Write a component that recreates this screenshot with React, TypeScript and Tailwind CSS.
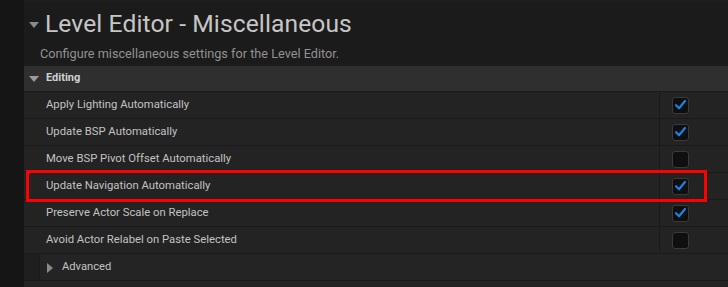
import React from 'react';

type Setting = { label: string; checked: boolean };

const settings: Setting[] = [
  { label: 'Apply Lighting Automatically', checked: true },
  { label: 'Update BSP Automatically', checked: true },
  { label: 'Move BSP Pivot Offset Automatically', checked: false },
  { label: 'Update Navigation Automatically', checked: true },
  { label: 'Preserve Actor Scale on Replace', checked: true },
  { label: 'Avoid Actor Relabel on Paste Selected', checked: false },
];

const CheckBox = ({ checked }: { checked: boolean }) => (
  <div className="w-[17px] h-[17px] rounded-[3px] bg-[#0f0f0f] border border-[#3a3a3a] flex items-center justify-center">
    {checked && (
      <svg width="17" height="17" viewBox="0 0 17 17" className="-m-px">
        <path d="M4 8.2 L7 11.3 L13 4" fill="none" stroke="#1c80ea" strokeWidth="2.2" strokeLinecap="round" strokeLinejoin="round" />
      </svg>
    )}
  </div>
);

const App = () => {
  return (
    <div className="relative w-[728px] h-[287px] flex bg-[#151515] overflow-hidden" style={{ fontFamily: 'Roboto, "Noto Sans", sans-serif' }}>
      {/* left gutter */}
      <div className="w-[24px] shrink-0 bg-[#151515]" />

      <div className="flex-1 flex flex-col bg-[#1b1b1b] border-t-2 border-[#1e1e1e]">
        {/* header */}
        <div className="h-[64px] flex flex-col">
          <div className="flex items-center h-[40px] pt-[4px]">
            <svg width="10" height="6" viewBox="0 0 10 6" className="ml-[5px] mt-[2px]">
              <path d="M0 0 H10 L5 6 Z" fill="#8a8a8a" />
            </svg>
            <span className="ml-[6px] text-[24.6px] leading-none text-[#c6c6c6] tracking-[0.1px]">Level Editor - Miscellaneous</span>
          </div>
          <div className="ml-[16px] mt-[6px] text-[12.7px] leading-none text-[#929292]">
            Configure miscellaneous settings for the Level Editor.
          </div>
        </div>

        {/* category */}
        <div className="h-[26px] flex items-center bg-[#2f2f2f] border-b border-[#1a1a1a]">
          <svg width="10" height="6" viewBox="0 0 10 6" className="ml-[5px]">
            <path d="M0 0 H10 L5 6 Z" fill="#9a9a9a" />
          </svg>
          <span className="ml-[7px] text-[11px] font-bold text-[#d0d0d0]">Editing</span>
        </div>

        {/* rows */}
        {settings.map((s) => (
          <div key={s.label} className="h-[27px] flex bg-[#232323] border-b border-[#1a1a1a]">
            <div className="w-[636px] flex items-center pl-[22px] pt-px border-r border-[#1a1a1a] text-[11.3px] text-[#c2c2c2]">
              {s.label}
            </div>
            <div className="flex-1 flex items-center pl-[12px]">
              <CheckBox checked={s.checked} />
            </div>
          </div>
        ))}

        {/* advanced */}
        <div className="h-[27px] flex bg-[#242424] border-b border-[#1a1a1a]">
          <div className="w-[16px] bg-[#1f1f1f] border-r border-[#1b1b1b]" />
          <div className="flex items-center pt-px">
            <svg width="6" height="10" viewBox="0 0 6 10" className="ml-[7px]">
              <path d="M0 0 V10 L6 5 Z" fill="#8a8a8a" />
            </svg>
            <span className="ml-[9px] text-[11.2px] text-[#c2c2c2]">Advanced</span>
          </div>
        </div>
        <div className="flex-1 bg-[#232323]" />
      </div>

      {/* highlight */}
      <div className="absolute left-[26px] top-[170px] w-[681px] h-[32px] border-[3px] border-[#ff0000] pointer-events-none" />
    </div>
  );
};

export default App;
